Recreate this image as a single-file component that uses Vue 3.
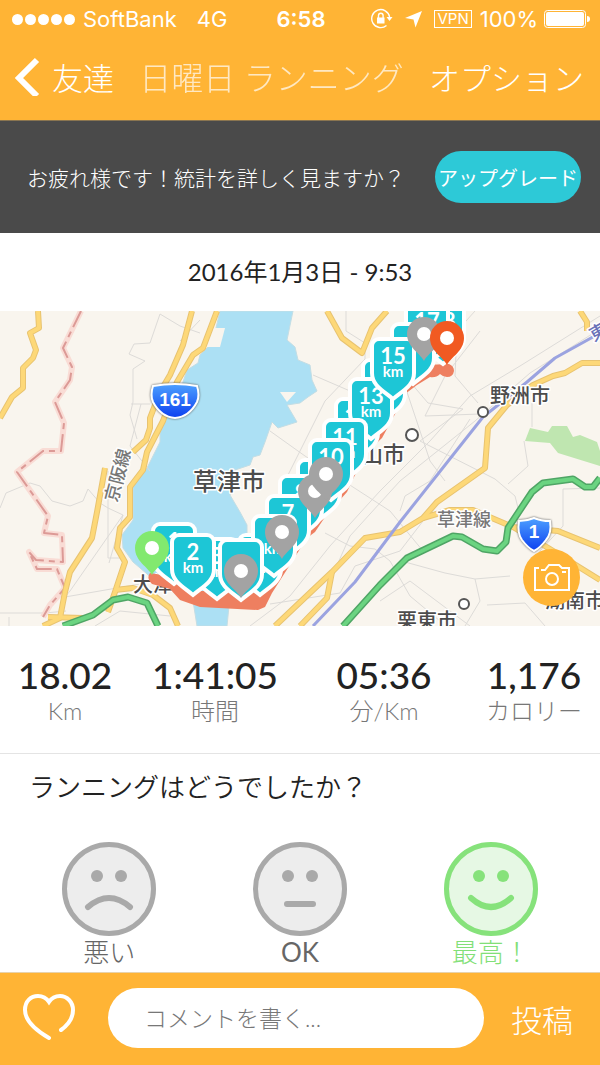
<template>
  <div class="page">
    <header class="top">
      <div class="status">
        <div class="status-left">
          <span class="dots"><i v-for="n in 5" :key="n"></i></span>
          <span>SoftBank</span>
          <span class="network">4G</span>
        </div>
        <b class="clock">6:58</b>
        <div class="status-right">
          <svg width="22" height="22" viewBox="0 0 22 22" fill="none" stroke="#fff" stroke-width="1.4">
            <path d="M15.5 17.5A9 9 0 1 1 18.6 9" />
            <path d="M15.5 9h6l-3 4z" fill="#fff" stroke="none" />
            <rect x="6" y="9.500" width="7.500" height="6" fill="#fff" stroke="none" />
            <path d="M7.500 10V7.500a2.300 2.300 0 0 1 4.600 0V10" />
          </svg>
          <svg class="arrow" width="17" height="17" viewBox="0 0 17 17">
            <path d="M17 0L10.500 16.500L8.500 8.500L0 7z" fill="#fff" />
          </svg>
          <span class="vpn">VPN</span>
          <span>100%</span>
          <svg class="battery" width="46" height="18" viewBox="0 0 46 18">
            <rect x="0.500" y="0.500" width="41" height="17" rx="3" fill="none" stroke="#fff" />
            <rect x="2" y="2" width="38" height="14" rx="2" fill="#fff" />
            <path d="M43 6q3 0 3 3t-3 3z" fill="#fff" />
          </svg>
        </div>
      </div>
      <nav class="nav">
        <button class="nav-btn" type="button">
          <svg width="26" height="40" viewBox="0 0 26 40" fill="none" stroke="#fff" stroke-width="6">
            <path d="M23 4L5 22l18 18" />
          </svg>
          友達
        </button>
        <h1 class="nav-title">日曜日 ランニング</h1>
        <button class="nav-btn" type="button">オプション</button>
      </nav>
    </header>

    <section class="banner">
      <p>お疲れ様です！統計を詳しく見ますか？</p>
      <button class="upgrade" type="button">アップグレード</button>
    </section>

    <p class="date">2016年1月3日 - 9:53</p>

    <section class="map">
      <svg class="map-canvas" viewBox="0 0 600 315" preserveAspectRatio="xMidYMid slice">
        <defs>
          <linearGradient id="shieldBlue" x1="0" y1="0" x2="0" y2="1">
            <stop offset="0" stop-color="#4ea0ff" />
            <stop offset="1" stop-color="#0b3ff0" />
          </linearGradient>
        </defs>
        <rect width="600" height="315" fill="#f9f5ee" />

        <!-- 琵琶湖 -->
        <path class="water" :d="lake" />
        <path d="M280 81h16l-9 10z" fill="#f9f5ee" />
        <path d="M210 17h15l-5 19h-16z" fill="#f9f5ee" />
        <path :d="park" fill="#bfe6b0" />

        <path v-for="(d, i) in lanes" :key="'l' + i" class="lane" :d="d" />
        <path class="border-glow" :d="border" />
        <path class="border-line" :d="border" />

        <path v-for="(d, i) in roads" :key="'c' + i" class="road-case" :d="d" />
        <path v-for="(d, i) in roads" :key="'r' + i" class="road" :d="d" />
        <path class="rail" d="M313 315L355 271L400 211L483 106L527 71L555 47L600 22" />
        <path v-for="(d, i) in highways" :key="'hc' + i" class="highway-case" :d="d" />
        <path v-for="(d, i) in highways" :key="'h' + i" class="highway" :d="d" />

        <g class="station">
          <circle cx="483" cy="101" r="5" />
          <circle cx="412" cy="124" r="6" />
          <circle cx="464" cy="293" r="5" />
        </g>

        <g class="place">
          <text x="193" y="179" font-size="24">草津市</text>
          <text x="490" y="92" font-size="20">野洲市</text>
          <text x="405" y="151" font-size="22" text-anchor="end">山市</text>
          <text x="133" y="281" font-size="20">大津市</text>
          <text x="397" y="317" font-size="20">栗東市</text>
          <text x="545" y="297" font-size="20">湖南市</text>
        </g>
        <g class="line-name">
          <text x="437" y="215" font-size="18">草津線</text>
          <text transform="translate(117 192) rotate(-75)" font-size="18">京阪線</text>
          <text class="jr" transform="translate(594 31) rotate(-30)" font-size="18">東</text>
        </g>

        <path
          d="M153 75q22-4 44 0q3 9 0 16q-8 15-22 16q-14-1-22-16q-3-7 0-16z"
          class="route-shield"
        />
        <text class="route-no" x="175" y="95">161</text>
        <path d="M519 210q8 0 15-3q7 3 16 3q2 12-4 19q-6 8-12 11q-6-3-12-11q-5-7-3-19z" class="route-shield" />
        <text class="route-no" x="534" y="227">1</text>

        <path :d="track" fill="#ee7f60" />

        <g v-for="m in markers" :key="m.km" :transform="`translate(${m.x} ${m.y})`">
          <path
            class="km"
            d="M6 2h28a7 7 0 0 1 7 7v27c0 12-10 17-21 26C9 53-1 48-1 36V9a7 7 0 0 1 7-7z"
          />
          <template v-if="!m.bare">
            <text class="km-no" x="20" y="27">{{ m.km }}</text>
            <text class="km-unit" x="20" y="40">km</text>
          </template>
        </g>

        <g v-for="(p, i) in pins" :key="'p' + i" :transform="`translate(${p.x} ${p.y})`">
          <path
            d="M0 27C-4 19-17 13-17 0A17 17 0 0 1 17 0C17 13 4 19 0 27z"
            :fill="p.color"
          />
          <circle r="7" fill="#fff" />
        </g>
      </svg>

      <button class="camera" type="button" aria-label="写真">
        <svg width="38" height="30" viewBox="0 0 38 30" fill="none" stroke="#fff" stroke-width="2">
          <path d="M6 5H2v22h34V5h-7l-3-3H16l-4 5H8" />
          <path d="M29 9h4" />
          <circle cx="19" cy="16" r="6" />
        </svg>
      </button>
    </section>

    <dl class="stats">
      <div v-for="s in stats" :key="s.label">
        <dd>{{ s.value }}</dd>
        <dt>{{ s.label }}</dt>
      </div>
    </dl>

    <section class="mood">
      <h2 id="mood-title">ランニングはどうでしたか？</h2>
      <div class="faces" role="radiogroup" aria-labelledby="mood-title">
        <label v-for="f in faces" :key="f.id" class="face" :class="[f.id, { active: mood === f.id }]">
          <input v-model="mood" type="radio" name="mood" :value="f.id" />
          <svg width="94" height="94" viewBox="-47 -47 94 94">
            <circle class="face-bg" r="44.500" />
            <circle class="eye" cx="-12" cy="-13" r="6" />
            <circle class="eye" cx="12" cy="-13" r="6" />
            <path class="mouth" :d="f.mouth" />
          </svg>
          <span>{{ f.label }}</span>
        </label>
      </div>
    </section>

    <form class="comment" @submit.prevent>
      <button class="like" type="button" aria-label="いいね">
        <svg width="52" height="48" viewBox="0 0 52 48" fill="none" stroke="#fff" stroke-width="4" stroke-linecap="round">
          <path d="M26 44C14 37 2 28 2 16C2 7 8 2 15 2C20 2 24 5 26 8C28 5 32 2 37 2C44 2 50 8 50 16C50 24 45 31 38 36" />
        </svg>
      </button>
      <input v-model="comment" type="text" placeholder="コメントを書く..." aria-label="コメントを書く" />
      <button class="post" type="submit">投稿</button>
    </form>
  </div>
</template>

<script setup>
import { ref } from "vue";

const mood = ref("great");
const comment = ref("");

const stats = [
  { value: "18.02", label: "Km" },
  { value: "1:41:05", label: "時間" },
  { value: "05:36", label: "分/Km" },
  { value: "1,176", label: "カロリー" },
];

const faces = [
  { id: "bad", label: "悪い", mouth: "M-21 18Q0 0 21 18" },
  { id: "ok", label: "OK", mouth: "M-13 15H13" },
  { id: "great", label: "最高！", mouth: "M-20 9Q0 27 20 9" },
];

// 後ろにあるものから順に描く（bare は文字なし）
const markers = [
  { km: 18, x: 423, y: -9 },
  { km: 17, x: 407, y: -9 },
  { km: 16, x: 393, y: 11, bare: true },
  { km: 14, x: 364, y: 47, bare: true },
  { km: 12, x: 337, y: 86 },
  { km: 13, x: 351, y: 66 },
  { km: 15, x: 373, y: 26 },
  { km: 11, x: 325, y: 107 },
  { km: 9, x: 299, y: 147, bare: true },
  { km: 10, x: 311, y: 127 },
  { km: 8, x: 281, y: 163 },
  { km: 7, x: 268, y: 183 },
  { km: 5, x: 240, y: 222 },
  { km: 6, x: 254, y: 203 },
  { km: 3, x: 197, y: 226 },
  { km: 4, x: 221, y: 227, bare: true },
  { km: 1, x: 154, y: 211 },
  { km: 2, x: 173, y: 222 },
];

const pins = [
  { x: 424, y: 23, color: "#a3a3a3" },
  { x: 315, y: 180, color: "#a3a3a3" },
  { x: 326, y: 163, color: "#a3a3a3" },
  { x: 282, y: 221, color: "#a3a3a3" },
  { x: 241, y: 260, color: "#a3a3a3" },
  { x: 152, y: 237, color: "#82e96f" },
  { x: 447, y: 27, color: "#f15a22" },
];

const lake =
  "M220 0H293L287 29L295 36L298 49L310 54L312 69L317 80L308 86L300 92L287 94L297 111L278 117L272 111L265 131L260 144L253 146L250 154L235 159L230 184L240 201L247 214V240L230 285L227 315H197L193 290L160 274L133 251L123 237L122 224L133 209V174L147 157L160 131V114L167 107L182 74L187 59L198 52L200 44L208 36L216 17z";
const park =
  "M530 117L548 121L552 115H567L573 126L580 124L597 131L600 140V155L558 142L550 132L525 130z";
const border =
  "M81 0L63 37L72 56L70 69L55 91L64 112L61 140H43L17 161L48 205L44 222L62 224L63 251L36 249L29 241L37 258H57L65 277L50 294L43 306";
const track =
  "M150 262L175 266L200 280H255L300 215L340 175L360 135L395 90L425 54L449 53q5 2 5 7q-1 6-7 6q-4 0-7-3q-4 4-10 3L417 74L405 83L400 94L382 127L367 141L355 164L347 181L325 206L315 221L307 227L272 282L265 296L258 299L200 296L180 289L170 278L152 273q-6-6-2-11z";

const roads = [
  "M38 0L39 17L30 22L36 39L33 47L23 57V77L12 86L0 107",
  "M192 0L183 34L170 64L160 81L150 107V117L146 129L133 141",
  "M105 157L97 201L92 227L70 261L65 281L60 307L43 315",
  "M48 306L83 307",
  "M217 0L203 37L193 44L177 71L163 110L147 141L143 159L130 176V206L120 217L117 237L125 251L115 281L108 301",
  "M115 279L133 277L153 284L170 297L178 315",
  "M327 0L342 27L362 42L372 17L387 0",
  "M275 315L332 261L365 227L400 221L423 207L437 191L485 157L488 117L507 94L533 74L553 65L565 62L582 52H600",
  "M332 261L327 287L300 315",
  "M423 207L450 199H473L513 216L558 220L600 237",
  "M513 216L550 238L600 269",
  "M580 0L587 11V20",
];

const highways = [
  "M63 315L93 304L113 289L128 286L147 292L158 315",
  "M343 315L380 274L400 254L407 247L453 225L462 226L483 238L497 240L506 231L508 217L532 181L543 172L573 168L585 176H593L600 167",
];

const lanes = [
  "M160 3L150 32L134 33L129 43L145 50L133 58V91L130 104L137 128",
  "M160 3L180 15L200 22M200 9L180 30",
  "M131 93H150M141 93L130 135L150 160",
  "M0 197L6 182L30 172L40 175L52 190L70 195L83 190L88 178L100 192L108 197L123 204L70 280L65 286L140 273",
  "M108 160V247H123M123 204L109 252",
  "M0 302H45L66 300M9 306V315",
  "M346 0V20L365 32L365 48L325 90L285 170",
  "M313 64L350 80M270 120L305 145L390 200L423 240",
  "M600 5L520 55L470 85L430 130L380 180L330 235L290 285L250 315",
  "M600 18L530 62L475 110L400 170L350 225L330 270",
  "M475 0L457 20L455 65L478 92M400 60L430 150L445 170M480 20L445 65L425 105L480 103",
  "M405 65L428 92L463 98L420 130L495 168L515 185L520 205",
  "M470 108L430 170L405 185L400 200M532 92V116M524 130L528 155L508 173",
  "M270 293L340 282L355 255L400 240L423 210",
  "M405 251L445 262L475 268L480 290L465 315M475 268L510 265",
  "M600 177L563 178V215L540 240L525 260M487 294L525 292L545 315",
  "M325 222L350 235L375 238L390 250L410 285L440 310M380 290L410 270L470 315",
  "M95 315L120 300L170 305",
];
</script>

<style>
body {
  margin: 0;
  background: #fff;
}
</style>

<style scoped>
.page {
  font-family: Lato, "Noto Sans CJK JP", sans-serif;
  font-weight: 300;
  color: #222;
  background: #fff;
}

p,
h1,
h2,
dl,
dd {
  margin: 0;
  font-weight: inherit;
}

button {
  padding: 0;
  border: 0;
  background: none;
  color: #fff;
  font: inherit;
  white-space: nowrap;
  cursor: pointer;
}

svg {
  display: block;
  flex: none;
}

.top {
  background: #ffb435;
  color: #fff;
}

.status {
  display: grid;
  grid-template-columns: 1fr auto 1fr;
  align-items: center;
  height: 38px;
  padding: 0 10px 0 12px;
  font-family: Inter, sans-serif;
  font-size: 22px;
  font-weight: 400;
}

.status-left,
.status-right {
  display: flex;
  align-items: center;
  gap: 8px;
}

.status-right {
  justify-content: flex-end;
}

.network {
  margin-left: 12px;
}

.clock {
  font-weight: 600;
}

.dots {
  display: flex;
  gap: 2px;
}

.dots i {
  width: 11px;
  height: 11px;
  border-radius: 50%;
  background: #fff;
}

.arrow {
  margin: 0 4px;
}

.vpn {
  padding: 0 2px;
  border: 1px solid #fff;
  font-size: 15px;
  line-height: 16px;
}

.battery {
  margin-left: -2px;
}

.nav {
  display: flex;
  align-items: center;
  justify-content: space-between;
  height: 82px;
  padding: 0 16px 6px 14px;
  box-sizing: border-box;
  font-size: 31px;
}

.nav-btn {
  display: flex;
  align-items: center;
  gap: 12px;
}

.nav-title {
  font-size: 32px;
  font-weight: 300;
  opacity: 0.7;
}

.banner {
  display: flex;
  align-items: center;
  justify-content: space-between;
  height: 113px;
  padding: 0 19px 0 27px;
  border-top: 1px solid #8a7550;
  box-sizing: border-box;
  background: #4a4a4a;
  color: #fff;
  font-size: 21px;
}

.upgrade {
  width: 146px;
  height: 52px;
  border-radius: 26px;
  background: #2dc9d7;
  font-size: 20px;
  font-weight: 400;
}

.date {
  line-height: 78px;
  font-size: 24px;
  font-weight: 400;
  text-align: center;
}

.map {
  position: relative;
}

.map-canvas {
  width: 100%;
  height: 315px;
}

.water {
  fill: #ace0f4;
  stroke: #c3dde4;
}

.lane,
.rail,
.border-glow,
.border-line,
.road,
.road-case,
.highway,
.highway-case {
  fill: none;
  stroke-linejoin: round;
}

.lane {
  stroke: #dddbd8;
}

.border-glow {
  stroke: #f9dcd5;
  stroke-width: 6px;
}

.border-line {
  stroke: #dc9a96;
  stroke-width: 2px;
  stroke-dasharray: 18 5 6 5;
}

.road-case {
  stroke: #e8c370;
  stroke-width: 6px;
}

.road {
  stroke: #fdd878;
  stroke-width: 4px;
}

.rail {
  stroke: #9ba3e0;
  stroke-width: 3px;
}

.highway-case {
  stroke: #4fa565;
  stroke-width: 7px;
}

.highway {
  stroke: #6bd481;
  stroke-width: 4px;
}

.station circle {
  fill: #fff;
  stroke: #555;
  stroke-width: 2px;
}

.place,
.line-name {
  font-family: "Noto Sans CJK JP", sans-serif;
  font-weight: 500;
  fill: #4c4c4c;
  stroke: #fff;
  stroke-width: 3px;
  stroke-linejoin: round;
  paint-order: stroke;
}

.line-name {
  fill: #777;
}

.jr {
  fill: #6a72b8;
}

.route-shield {
  fill: url(#shieldBlue);
  stroke: #fff;
  stroke-width: 2px;
  filter: drop-shadow(0 0 1px #555);
}

.route-no {
  fill: #fff;
  font-family: "Liberation Sans", sans-serif;
  font-size: 19px;
  font-weight: 700;
  text-anchor: middle;
}

.km {
  fill: #1dc6d6;
  stroke: #fff;
  stroke-width: 4px;
}

.km-no,
.km-unit {
  fill: #fff;
  font-size: 22px;
  font-weight: 700;
  text-anchor: middle;
}

.km-unit {
  font-size: 15px;
}

.camera {
  position: absolute;
  right: 20px;
  bottom: 20px;
  display: grid;
  place-items: center;
  width: 57px;
  height: 57px;
  border-radius: 50%;
  background: #ffb435;
}

.stats {
  display: grid;
  grid-template-columns: 130fr 170fr 168fr 132fr;
  height: 128px;
  padding-top: 28px;
  box-sizing: border-box;
  border-bottom: 1px solid #e4e4e4;
  text-align: center;
  white-space: nowrap;
}

.stats dd {
  font-size: 37px;
  font-weight: 500;
  line-height: 42px;
}

.stats dt {
  color: #777;
  font-size: 24px;
  line-height: 30px;
}

.mood h2 {
  padding-left: 29px;
  font-size: 26px;
  font-weight: 350;
  line-height: 66px;
}

.faces {
  display: grid;
  grid-template-columns: repeat(3, 1fr);
  padding: 22px 14px 4px;
}

.face {
  display: flex;
  flex-direction: column;
  align-items: center;
  color: #666;
  font-size: 26px;
  line-height: 32px;
  cursor: pointer;
}

.face.ok {
  font-weight: 400;
}

.face input {
  position: absolute;
  opacity: 0;
}

.face-bg {
  fill: #ededed;
  stroke: #a9a9a9;
  stroke-width: 5px;
}

.eye {
  fill: #a9a9a9;
}

.mouth {
  fill: none;
  stroke: #a9a9a9;
  stroke-width: 6px;
  stroke-linecap: round;
}

.active {
  color: #82e077;
}

.active .face-bg {
  fill: #e6f8e4;
  stroke: #86e27b;
}

.active .eye {
  fill: #86e27b;
}

.active .mouth {
  stroke: #86e27b;
}

.comment {
  display: flex;
  align-items: center;
  height: 93px;
  padding: 0 27px 2px 23px;
  border-top: 1px solid #e8d2ab;
  box-sizing: border-box;
  background: #ffb435;
}

.comment input {
  flex: 1;
  min-width: 0;
  height: 60px;
  margin: 0 27px 0 33px;
  padding: 0 36px;
  border: 0;
  border-radius: 30px;
  box-sizing: border-box;
  background: #fff;
  color: #222;
  font: inherit;
  font-size: 23px;
}

.comment input::placeholder {
  color: #777;
}

.post {
  font-size: 31px;
}
</style>
